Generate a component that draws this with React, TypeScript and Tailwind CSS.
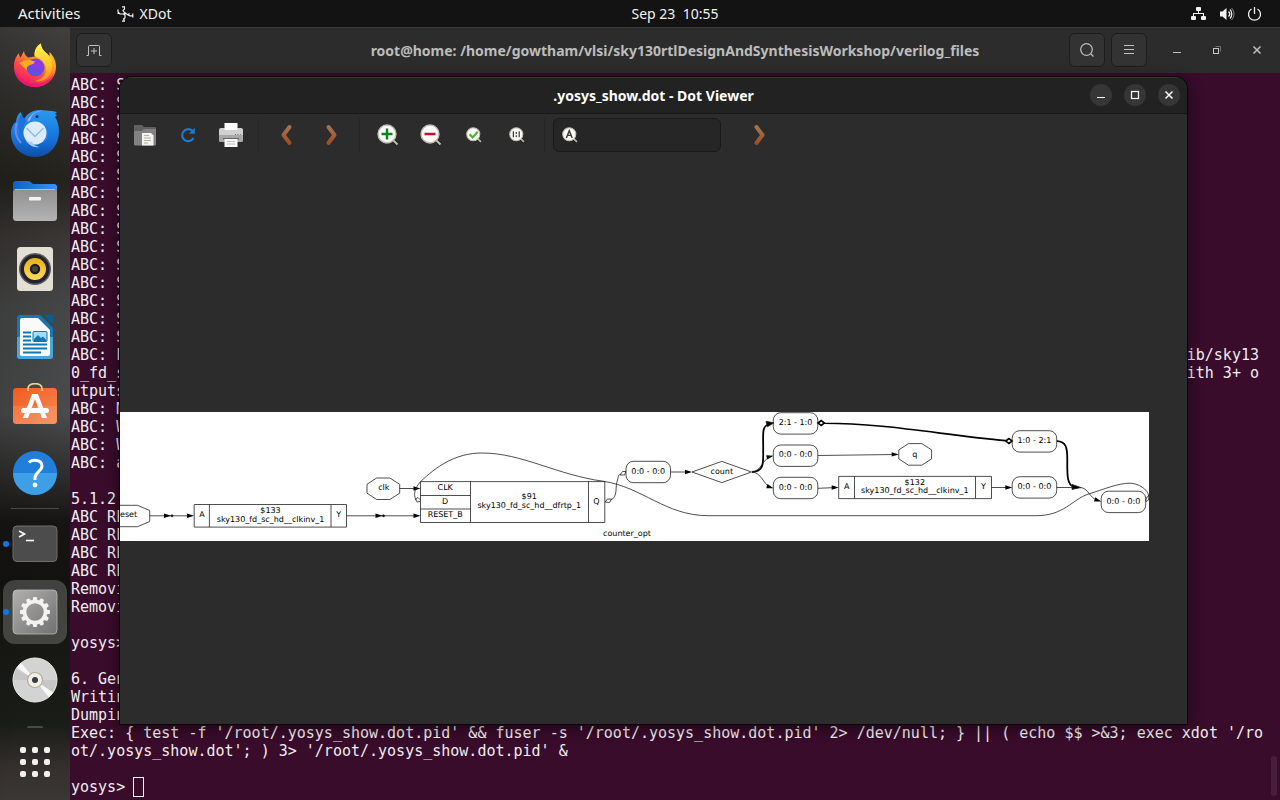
import type { ReactNode } from 'react';

const outputRows: [string, string?][] = [
  ...Array.from({ length: 15 }, (): [string] => ['ABC: S']),
  ['ABC: L', 'ib/sky13'],
  ['0_fd_s', 'ith 3+ o'],
  ['utputs'],
  ['ABC: M'],
  ['ABC: W'],
  ['ABC: W'],
  ['ABC: a'],
  [''],
  ['5.1.2.'],
  ['ABC RE'],
  ['ABC RE'],
  ['ABC RE'],
  ['ABC RE'],
  ['Removi'],
  ['Removi'],
  [''],
  ['yosys>'],
  [''],
  ['6. Gen'],
  ['Writin'],
  ['Dumpin'],
  [
    "Exec: { test -f '/root/.yosys_show.dot.pid' && fuser -s '/root/.yosys_show.dot.pid' 2> /dev/null; } || ( echo $$ >&3; exec xdot '/ro",
  ],
  ["ot/.yosys_show.dot'; ) 3> '/root/.yosys_show.dot.pid' &"],
  [''],
];

/* ---------- Top bar ---------- */

function TopBar() {
  return (
    <header className="flex h-[27px] shrink-0 items-center bg-[#131313] text-[14px] text-[#f2f2f2]">
      <div className="flex w-[160px] shrink-0 items-center whitespace-nowrap pl-[18px]">
        <button type="button" className="text-[15px]">Activities</button>
        <button type="button" className="ml-9 flex items-center gap-[6px]">
          <svg width="17" height="16" viewBox="0 0 17 16" fill="none" stroke="#f2f2f2" strokeWidth="1.2" aria-hidden="true">
            <path d="M5 .8h3M7.500.8V3L6 4.500 7.800 7M1 3.500v2.500l2 2h3.500M.5 7.500h2.500M6.500 8.500l2-1.500 2.500 2 1.500-1.500M11 9l2 .8h3M15.800 7.500v4M8 9v3l-2 1.200M7 12.500v2.500M5 15.200h3" />
            <circle cx="7.500" cy="8" r="1.200" fill="#f2f2f2" stroke="none" />
          </svg>
          XDot
        </button>
      </div>
      <div className="flex-1 text-center">Sep 23&nbsp; 10:55</div>
      <button type="button" aria-label="System menu" className="flex w-[90px] shrink-0 items-center justify-start gap-3">
        <svg width="17" height="16" viewBox="0 0 17 16" fill="#f2f2f2" aria-hidden="true">
          <rect x="6" y="1" width="5" height="4" rx="1" />
          <rect x="1" y="10" width="5" height="4" rx="1" />
          <rect x="11" y="10" width="5" height="4" rx="1" />
          <path d="M8 5h1v2h5v3h-1V8H4v2H3V7h5z" />
        </svg>
        <svg width="16" height="16" viewBox="0 0 16 16" fill="none" stroke="#f2f2f2" aria-hidden="true">
          <path d="M1 5.500h2.500L7.500 2v12L3.500 10.500H1z" fill="#f2f2f2" stroke="none" />
          <path d="M9.500 5.500c1.400 1.400 1.400 3.600 0 5" strokeWidth="1.400" />
          <path d="M11 3.500c2.400 2.500 2.400 6.500 0 9" strokeWidth="1.200" />
          <path d="M12.500 2c3.300 3.300 3.300 8.700 0 12" strokeWidth="1" opacity=".5" />
        </svg>
        <svg width="15" height="16" viewBox="0 0 15 16" fill="none" stroke="#f2f2f2" strokeWidth="1.3" aria-hidden="true">
          <path d="M4.500 3a6 6 0 1 0 6 0M7.500 1v7" />
        </svg>
      </button>
    </header>
  );
}

/* ---------- Dock ---------- */

function FirefoxIcon() {
  return (
    <svg width="46" height="46" viewBox="0 0 46 46" aria-hidden="true">
      <defs>
        <linearGradient id="ffBody" x1=".85" y1="0" x2=".3" y2="1">
          <stop offset="0" stopColor="#ffe23e" />
          <stop offset=".35" stopColor="#ffa51e" />
          <stop offset=".65" stopColor="#ff4f45" />
          <stop offset="1" stopColor="#f0126c" />
        </linearGradient>
        <linearGradient id="ffFlame" x1=".5" y1="0" x2=".6" y2="1">
          <stop offset="0" stopColor="#fff44f" />
          <stop offset=".6" stopColor="#ffc52c" />
          <stop offset="1" stopColor="#ff8b1c" />
        </linearGradient>
        <radialGradient id="ffGlobe" cx=".6" cy=".25" r=".8">
          <stop offset="0" stopColor="#a030f0" />
          <stop offset=".6" stopColor="#6a4ae0" />
          <stop offset="1" stopColor="#4460d8" />
        </radialGradient>
      </defs>
      <path d="M2 25c0-6 1.500-10 5-14 0 2 .8 3.500 1.700 4.500L12 9c.3 3 1.500 5 4 6.500l7-1C22 9 24 4 29 1.500c0 5 3 7.500 6.500 10.500 1 1 1.500 2 2 3V10c4 4 6.500 9 6.500 14.500C44 36 35 45 23 45S2 36 2 25z" fill="url(#ffBody)" />
      <path d="M22.500 14C22 9 24.500 4 29 1.500c0 5 3 7.500 6.500 10.500C41 17 42 28 37 34c-4 5-9 6-14 5 9-2 13-9 10-16-2-5-6-7-10.500-9z" fill="url(#ffFlame)" />
      <circle cx="23.500" cy="25.500" r="9" fill="url(#ffGlobe)" />
      <path d="M7.500 21c4-3.500 9-3.500 15.500-1.500-1 2.500-3 3-5 3.500-3 1-4 3-3 5.500-2-1.500-5-5-7.500-7.500z" fill="#ffab24" />
      <path d="M3 28c3 9 11 14 20 14 8 0 15-4 19-11-3 9-10 14-19 14C12 45 4 38 3 28z" fill="#e8127c" opacity=".7" />
    </svg>
  );
}

function ThunderbirdIcon() {
  return (
    <svg width="48" height="48" viewBox="0 0 48 48" aria-hidden="true">
      <defs>
        <linearGradient id="tbBody" x1=".5" y1="0" x2=".5" y2="1">
          <stop offset="0" stopColor="#2a9af0" />
          <stop offset=".6" stopColor="#1674dc" />
          <stop offset="1" stopColor="#0d4ea6" />
        </linearGradient>
      </defs>
      <path d="M10 3c0 3 1 5 3 7 3-5 8-9 16-9 4 0 8 1 12 1l5 1-2 2 2 1-2 2c2 3 4 8 4 14 0 15-10 26-24 26S0 37 0 24c0-5 2-9 5-11 0-4 2-8 5-10z" fill="url(#tbBody)" />
      <path d="M11 4c0 4 2 6 5 8-4 4-6 9-4 15-5-4-7-16-1-23z" fill="#1f6fe0" />
      <path d="M6 14c-3 7-1 15 4 20" fill="none" stroke="#7088e8" strokeWidth="2" />
      <path d="M16 12c3-6 8-10 15-10.500-7 2-10 4-11 8l-2 3z" fill="#b0a4f0" />
      <circle cx="26" cy="7.500" r="1.500" fill="#15336c" />
      <circle cx="24" cy="24" r="11.500" fill="#dcecfc" />
      <path d="M15.500 19l8.500 8.500 8.500-8.500" fill="none" stroke="#8fbce8" strokeWidth="1.400" />
      <path d="M15 32c3 4 8 7 13 6-4-1-6-3-7-5z" fill="#a9ccf8" />
      <path d="M36 22c2 8-3 13-9 13 5 0 9-4 9-13z" fill="#5e7ae8" />
    </svg>
  );
}

function FilesIcon() {
  return (
    <svg width="46" height="42" viewBox="0 0 46 42" aria-hidden="true">
      <defs>
        <linearGradient id="flFront" x1="0" y1="0" x2="0" y2="1">
          <stop offset="0" stopColor="#8f8f8f" />
          <stop offset="1" stopColor="#b4b4b4" />
        </linearGradient>
        <linearGradient id="flBack" x1="0" y1="0" x2="1" y2="0">
          <stop offset="0" stopColor="#0a62c8" />
          <stop offset="1" stopColor="#3a94ee" />
        </linearGradient>
      </defs>
      <path d="M1 4a3 3 0 0 1 3-3h12c3 0 3 3 6 3h20a3 3 0 0 1 3 3v20H1z" fill="url(#flBack)" />
      <rect x="1" y="9" width="44" height="32" rx="3.500" fill="url(#flFront)" />
      <path d="M3 9.500h40" stroke="#bdbdbd" />
      <rect x="17" y="17" width="12" height="3.500" rx="1" fill="#f4f4f4" />
    </svg>
  );
}

function RhythmboxIcon() {
  return (
    <svg width="38" height="46" viewBox="0 0 38 46" aria-hidden="true">
      <defs>
        <linearGradient id="rbCone" x1="0" y1="0" x2="0" y2="1">
          <stop offset="0" stopColor="#e8b010" />
          <stop offset="1" stopColor="#ffdc5c" />
        </linearGradient>
      </defs>
      <rect x="1" y="1" width="36" height="44" rx="3.500" fill="#e3dfd5" />
      <circle cx="19" cy="23" r="16" fill="#5d5d5d" />
      <circle cx="19" cy="23" r="14.500" fill="#23222e" />
      <circle cx="19" cy="23" r="11" fill="url(#rbCone)" />
      <circle cx="19" cy="23" r="5.200" fill="#1b1b1b" />
      <circle cx="19" cy="23" r="3" fill="#454545" />
    </svg>
  );
}

function WriterIcon() {
  return (
    <svg width="38" height="46" viewBox="0 0 38 46" aria-hidden="true">
      <rect x="1" y="1" width="36" height="44" rx="3" fill="#1478b4" />
      <path d="M1 23h36v19a3 3 0 0 1-3 3H4a3 3 0 0 1-3-3z" fill="#48a8dc" />
      <path d="M23 0h15v15z" fill="#3b4a50" />
      <path d="M28 1h9v9z" fill="#0d5c92" />
      <path d="M6 4h16l12 12v24a2 2 0 0 1-2 2H6a2 2 0 0 1-2-2V6a2 2 0 0 1 2-2z" fill="#fafafa" />
      <path d="M7 18.500h8M7 22.500h8M7 26.500h8M7 30.500h24M7 34.500h24M7 38.500h18" stroke="#0f76b8" strokeWidth="2" />
      <rect x="17" y="17.500" width="14" height="10" rx="1" fill="#a8daf4" stroke="#0f76b8" />
      <path d="M18 27v-2l4-4 3 3 2-1.500 3 3V27z" fill="#0f76b8" />
    </svg>
  );
}

function SoftwareIcon() {
  return (
    <svg width="46" height="44" viewBox="0 0 46 44" aria-hidden="true">
      <defs>
        <linearGradient id="swBag" x1="0" y1="0" x2="1" y2="1">
          <stop offset="0" stopColor="#f35a20" />
          <stop offset="1" stopColor="#f58a55" />
        </linearGradient>
      </defs>
      <rect x="1" y="5" width="44" height="36" rx="3.500" fill="url(#swBag)" />
      <path d="M1 23h44v14.500a3.500 3.500 0 0 1-3.500 3.500h-37A3.500 3.500 0 0 1 1 37.500z" fill="#fff" opacity=".1" />
      <path d="M16 8V5.500c0-6.500 14-6.500 14 0V8" fill="none" stroke="#f0d29c" strokeWidth="1.700" />
      <path d="M20 11h6l9 24h-5l-7-19-7 19h-5z" fill="#fff" />
      <rect x="9" y="25" width="28" height="5" rx="2.500" fill="#fff" />
    </svg>
  );
}

function HelpIcon() {
  return (
    <svg width="46" height="46" viewBox="0 0 46 46" aria-hidden="true">
      <circle cx="23" cy="23" r="22" fill="#1f7fda" />
      <path d="M1 23a22 22 0 0 0 44 0z" fill="#3f9fe6" />
      <path d="M17 12.500c3-3.500 13-3 13 3.500 0 5-7 6-7 12v2" fill="none" stroke="#fff" strokeWidth="3" />
      <circle cx="23" cy="35" r="2.400" fill="#fff" />
    </svg>
  );
}

function TerminalIcon() {
  return (
    <svg width="46" height="38" viewBox="0 0 46 38" aria-hidden="true">
      <rect x="1" y="1" width="44" height="35.500" rx="4" fill="#4c4c4c" stroke="#6c6c6c" />
      <path d="M7 6l5.500 3L7 12" fill="none" stroke="#fff" strokeWidth="1.600" />
      <path d="M14 15.500h8" stroke="#fff" strokeWidth="1.600" />
    </svg>
  );
}

const gearTeeth = [0, 30, 60, 90, 120, 150, 180, 210, 240, 270, 300, 330];

function GearIcon() {
  return (
    <svg width="46" height="46" viewBox="0 0 46 46" aria-hidden="true">
      <defs>
        <linearGradient id="gearTile" x1="0" y1="0" x2="1" y2="1">
          <stop offset="0" stopColor="#b0b0b0" />
          <stop offset="1" stopColor="#707070" />
        </linearGradient>
      </defs>
      <rect x="1" y="1" width="44" height="44" rx="4" fill="url(#gearTile)" stroke="#c6c6c6" strokeWidth=".7" />
      <circle cx="23" cy="23" r="10.500" fill="none" stroke="#f4f2f0" strokeWidth="3.600" />
      {gearTeeth.map((a) => (
        <path key={a} d="M20.500 12l.8-4h3.400l.8 4z" fill="#f4f2f0" transform={`rotate(${a} 23 23)`} />
      ))}
    </svg>
  );
}

function DiscIcon() {
  return (
    <svg width="46" height="46" viewBox="0 0 46 46" aria-hidden="true">
      <circle cx="23" cy="23" r="22" fill="#d3d3d3" stroke="#ececec" />
      <path d="M23 23L1.500 23A22 22 0 0 1 4 12zM23 23h21.500A22 22 0 0 1 39 37z" fill="#c6c6c6" />
      <path d="M23 23L5 10.500l4-5zM23 23l18 12.500-4 5z" fill="#f8f8f8" />
      <circle cx="23" cy="23" r="7.500" fill="#f0efec" stroke="#b2ac9c" strokeWidth="1.200" />
      <circle cx="23" cy="23" r="3" fill="#3c3c3c" />
    </svg>
  );
}

function DockItem({ label, running, active, children }: { label: string; running?: boolean; active?: boolean; children: ReactNode }) {
  return (
    <li className="relative flex h-[68px] items-center justify-center">
      {running && <span className="absolute left-[3px] size-[6px] rounded-full bg-[#0a78e8]" />}
      <button
        type="button"
        aria-label={label}
        className={
          active
            ? 'flex size-16 items-center justify-center rounded-xl bg-white/20'
            : 'flex size-16 items-center justify-center rounded-xl'
        }
      >
        {children}
      </button>
    </li>
  );
}

function Dock() {
  return (
    <nav
      aria-label="Dock"
      className="flex w-[70px] shrink-0 flex-col overflow-hidden bg-[linear-gradient(100deg,rgba(10,8,4,0.3)_0%,rgba(10,8,4,0)_70%),linear-gradient(180deg,#4c4b4a_0%,#3c3a38_8%,#26251f_20%,#3e3b39_27%,#494a4b_36%,#4b4c4d_50%,#353535_56%,#171513_64%,#12120f_72%,#171813_80%,#1a1c17_90%,#35302d_96%,#3b3734_100%)]"
    >
      <ul className="pt-1">
        <DockItem label="Firefox"><FirefoxIcon /></DockItem>
        <DockItem label="Thunderbird"><ThunderbirdIcon /></DockItem>
        <DockItem label="Files"><FilesIcon /></DockItem>
        <DockItem label="Rhythmbox"><RhythmboxIcon /></DockItem>
        <DockItem label="Writer"><WriterIcon /></DockItem>
        <DockItem label="Software"><SoftwareIcon /></DockItem>
        <DockItem label="Help"><HelpIcon /></DockItem>
        <li role="separator" className="mx-[11px] mb-px mt-px h-px bg-white/20" />
        <DockItem label="Terminal" running><TerminalIcon /></DockItem>
        <DockItem label="XDot" running active><GearIcon /></DockItem>
        <DockItem label="Disc"><DiscIcon /></DockItem>
      </ul>
      <div className="mx-auto mt-3 h-[2px] w-4 rounded-t-full bg-white/20" />
      <button type="button" aria-label="Show applications" className="mx-auto mt-[19px] grid grid-cols-3 gap-[6px]">
        {Array.from({ length: 9 }, (_, i) => (
          <span key={i} className="size-[6px] rounded-[2px] bg-[#f2f2f2]" />
        ))}
      </button>
    </nav>
  );
}

/* ---------- Terminal ---------- */

function Terminal() {
  const headerButton = 'flex h-[34px] w-9 items-center justify-center rounded-md border border-[#1c1c1c] bg-[#333333]';
  return (
    <section className="flex min-w-0 flex-1 flex-col bg-[#380c2a]">
      <header className="grid h-[46px] shrink-0 grid-cols-[1fr_auto_1fr] items-center border-t border-[#3a3a3a] bg-[#2c2c2c] pb-px text-[#b8b8b8]">
        <div className="pl-[6px]">
          <button type="button" aria-label="New tab" className={headerButton}>
            <svg width="16" height="16" viewBox="0 0 16 16" fill="none" stroke="#c0c0c0" aria-hidden="true">
              <path d="M.5 13.500h2V4.500a1 1 0 0 1 1-1h9a1 1 0 0 1 1 1v9h2M8 6v6M5 9h6" />
            </svg>
          </button>
        </div>
        <h1 className="whitespace-nowrap text-[14px] font-bold text-[#bcbcbc]">
          root@home: /home/gowtham/vlsi/sky130rtlDesignAndSynthesisWorkshop/verilog_files
        </h1>
        <div className="flex items-center justify-end pr-[3px]">
          <button type="button" aria-label="Search" className={headerButton}>
            <svg width="16" height="16" viewBox="0 0 16 16" fill="none" stroke="#b8b8b8" strokeWidth="1.300" aria-hidden="true">
              <circle cx="7.500" cy="7.500" r="5.800" />
              <path d="M11.700 11.700L14.500 14.500" />
            </svg>
          </button>
          <button type="button" aria-label="Menu" className={`${headerButton} ml-[6px]`}>
            <svg width="12" height="12" viewBox="0 0 12 12" stroke="#c0c0c0" aria-hidden="true">
              <path d="M1 1.500h10M1 5.500h10M1 9.500h10" />
            </svg>
          </button>
          <button type="button" aria-label="Minimize" className="ml-[10px] flex size-10 items-center justify-center">
            <svg width="10" height="10" viewBox="0 0 10 10" stroke="#c0c0c0" aria-hidden="true">
              <path d="M1 7.500h8" />
            </svg>
          </button>
          <button type="button" aria-label="Restore" className="flex size-10 items-center justify-center">
            <svg width="10" height="10" viewBox="0 0 10 10" fill="none" aria-hidden="true">
              <path d="M3.500 1.500h5v5" stroke="#6c6c6c" />
              <rect x="1.500" y="3.500" width="5" height="5" stroke="#c8c8c8" />
            </svg>
          </button>
          <button type="button" aria-label="Close" className="flex size-10 items-center justify-center">
            <svg width="10" height="10" viewBox="0 0 10 10" stroke="#c0c0c0" strokeWidth="1.500" aria-hidden="true">
              <path d="M1.500 1.500l7 7M8.500 1.500l-7 7" />
            </svg>
          </button>
        </div>
      </header>
      <div className="flex min-h-0 flex-1 overflow-hidden">
        <div className="min-w-0 flex-1 whitespace-pre pl-px pt-[3px] font-['DejaVu_Sans_Mono',monospace] text-[15px] leading-[18px] text-[#f0eef0]">
          {outputRows.map(([start, end], i) => (
            <div key={i} className="flex h-[18px] justify-between">
              <span>{start}</span>
              {end && <span>{end}</span>}
            </div>
          ))}
          <div className="flex h-[18px] items-center">
            <span>{'yosys> '}</span>
            <span className="-ml-px h-5 w-[11px] shrink-0 border border-white" />
          </div>
        </div>
        <div className="flex w-[21px] shrink-0 items-end justify-end pb-1 pr-[3px]">
          <div className="h-10 w-[6px] rounded-full bg-[#471f3b]" />
        </div>
      </div>
    </section>
  );
}

/* ---------- Dot viewer ---------- */

function ChevronGlyph({ back, id }: { back?: boolean; id: string }) {
  return (
    <svg width="14" height="22" viewBox="0 0 14 22" fill="none" aria-hidden="true">
      <defs>
        <linearGradient id={id} gradientUnits="userSpaceOnUse" x1="0" y1="0" x2="0" y2="22">
          <stop offset="0" stopColor="#a27a58" />
          <stop offset=".5" stopColor="#a2623c" />
          <stop offset="1" stopColor="#a04420" />
        </linearGradient>
      </defs>
      <path
        d={back ? 'M9.500 3L3.500 11l6 8' : 'M4.500 3l6 8-6 8'}
        stroke={`url(#${id})`}
        strokeWidth="4"
        strokeLinecap="round"
        strokeLinejoin="round"
      />
    </svg>
  );
}

function Magnifier({ small, children }: { small?: boolean; children: ReactNode }) {
  return (
    <svg width={small ? 16 : 22} height={small ? 16 : 22} viewBox="0 0 22 22" aria-hidden="true">
      <path d="M15 15l5.500 5.500" stroke="#1c1c18" strokeWidth="4" />
      <path d="M15 15l5.500 5.500" stroke="#bcb8ac" strokeWidth="2.200" />
      <circle cx="10" cy="10" r="9" fill="#fafaf8" stroke="#c0bcb0" strokeWidth="1.400" />
      {children}
    </svg>
  );
}

function ToolButton({ label, children }: { label: string; children: ReactNode }) {
  return (
    <button type="button" aria-label={label} className="flex h-9 w-[43px] shrink-0 items-center justify-center">
      {children}
    </button>
  );
}

function Separator() {
  return (
    <div className="flex w-[13px] shrink-0 justify-center">
      <div className="h-[34px] w-px bg-[#262626]" />
    </div>
  );
}

function Toolbar() {
  return (
    <div className="flex h-[42px] shrink-0 items-center pl-[3px]">
      <ToolButton label="Open">
        <svg width="24" height="24" viewBox="0 0 24 24" aria-hidden="true">
          <path d="M1 3a1 1 0 0 1 1-1h7l2 2h11a1 1 0 0 1 1 1v17H1z" fill="#606060" />
          <path d="M1 8h8l2-2h12v15a1.500 1.500 0 0 1-1.500 1.500h-19A1.500 1.500 0 0 1 1 21z" fill="#828282" />
          <path d="M9 10h9l2.500 2.500V22.500H9z" fill="#f4f3f0" />
          <path d="M11 12.500h5M11 15h7M11 17.500h7M11 20h4" stroke="#b4b0a8" />
        </svg>
      </ToolButton>
      <ToolButton label="Reload">
        <svg width="16" height="16" viewBox="0 0 16 16" fill="none" aria-hidden="true">
          <path d="M12.500 4a6 6 0 1 0 1 7" stroke="#1c7ad0" strokeWidth="2.200" />
          <path d="M14.800.800v6H8.800z" fill="#1c7ad0" />
        </svg>
      </ToolButton>
      <ToolButton label="Print">
        <svg width="24" height="24" viewBox="0 0 24 24" aria-hidden="true">
          <rect x="0" y="5" width="24" height="14" rx="2" fill="#d0d0ce" />
          <path d="M0 12h24v5a2 2 0 0 1-2 2H2a2 2 0 0 1-2-2z" fill="#a8a8a6" />
          <rect x="5.500" y="0" width="13" height="7" fill="#fbfbfb" />
          <path d="M4 15h16v1.500H4z" fill="#666" />
          <rect x="5.500" y="16" width="13" height="8" fill="#fbfbfb" />
          <path d="M8 18.500h8M8 21h8" stroke="#bbb" />
          <path d="M16 11.500h1M18.500 11.500h1" stroke="#d04040" strokeWidth="1.200" />
          <path d="M21 11.500h1" stroke="#4a9a4a" strokeWidth="1.200" />
        </svg>
      </ToolButton>
      <Separator />
      <button type="button" aria-label="Back" className="flex w-11 shrink-0 justify-center"><ChevronGlyph back id="chevBack" /></button>
      <button type="button" aria-label="Forward" className="flex w-11 shrink-0 justify-center"><ChevronGlyph id="chevFwd" /></button>
      <Separator />
      <ToolButton label="Zoom in">
        <Magnifier><path d="M10 4.500v11M4.500 10h11" stroke="#0b8420" strokeWidth="2.400" /></Magnifier>
      </ToolButton>
      <ToolButton label="Zoom out">
        <Magnifier><path d="M4.500 10h11" stroke="#c4102c" strokeWidth="2.600" /></Magnifier>
      </ToolButton>
      <ToolButton label="Zoom to fit">
        <Magnifier small><path d="M5 10l4 4.500 7-8" fill="none" stroke="#4cae2c" strokeWidth="2.800" /></Magnifier>
      </ToolButton>
      <ToolButton label="Zoom 100%">
        <Magnifier small><path d="M6 6v8M14 6v8M10 7v2.500M10 11.500V14" stroke="#3c3c3c" strokeWidth="1.700" /></Magnifier>
      </ToolButton>
      <Separator />
      <label className="ml-[2px] flex h-[34px] w-[168px] shrink-0 items-center gap-2 rounded-md border border-[#1a1a1a] bg-[#262626] pl-[8px]">
        <Magnifier small>
          <path d="M6 15l4-10 4 10M7.500 11.500h5" fill="none" stroke="#3c3c3c" strokeWidth="2" />
        </Magnifier>
        <input type="text" aria-label="Find" className="min-w-0 flex-1 bg-transparent text-[14px] text-white outline-none" />
      </label>
      <div className="ml-4 flex">
        <ToolButton label="Find next"><ChevronGlyph id="chevFind" /></ToolButton>
      </div>
    </div>
  );
}

function Arrow({ x, y, angle = 0 }: { x: number; y: number; angle?: number }) {
  return <path d="M0 0L-7-2.200V2.200z" fill="#000" stroke="none" transform={`translate(${x} ${y}) rotate(${angle})`} />;
}

function RangeNode({ x, y, text }: { x: number; y: number; text: string }) {
  return (
    <g>
      <rect x={x} y={y} width="44.500" height="21.400" rx="7.500" />
      <Label x={x + 22.200} y={y + 12.400}>{text}</Label>
    </g>
  );
}

function Label({ x, y, children }: { x: number; y: number; children: ReactNode }) {
  return (
    <text x={x} y={y} textAnchor="middle" fill="#000" stroke="none">
      {children}
    </text>
  );
}

function Graph() {
  return (
    <svg
      width="1029"
      height="129"
      viewBox="120 412 1029 129"
      className="block shrink-0 bg-white font-['DejaVu_Sans',sans-serif] text-[8px] [text-rendering:geometricPrecision]"
      fill="none"
      stroke="#222"
      strokeWidth=".8"
      role="img"
      aria-label="counter_opt"
    >
      <path d="M105 505.300h32.500l12.200 5.200v11l-12.200 5.200H105" />
      <Label x={127} y={517}>reset</Label>
      <path d="M149.700 515.800H190" />
      <Arrow x={171} y={515.800} />
      <circle cx="172" cy="515.800" r="1" fill="#000" />
      <Arrow x={194} y={515.800} />

      <path d="M194.200 504.500h152.300v22.600H194.200zM209.400 504.500v22.600M331 504.500v22.600" />
      <Label x={202} y={517}>A</Label>
      <Label x={270.500} y={513}>$133</Label>
      <Label x={270.500} y={522}>sky130_fd_sc_hd__clkinv_1</Label>
      <Label x={338.700} y={517}>Y</Label>
      <path d="M346.500 515.800H416" />
      <Arrow x={382.500} y={515.800} />
      <circle cx="383.500" cy="515.800" r="1" fill="#000" />
      <Arrow x={420.500} y={515.800} />

      <path d="M376.700 478h13.200l9.800 6.300v8.900l-9.800 6.300h-13.200l-9.700-6.300v-8.900z" />
      <Label x={383.800} y={490}>clk</Label>
      <path d="M399.700 488.500H416" />
      <Arrow x={420.500} y={488.500} />

      <path d="M420.500 481.600h184.300v40.900H420.500zM470.500 481.600v40.900M588.500 481.600v40.900M420.500 495.500h50M420.500 509h50" />
      <Label x={445.200} y={490}>CLK</Label>
      <Label x={445.200} y={504}>D</Label>
      <Label x={445.200} y={517}>RESET_B</Label>
      <Label x={529.200} y={499}>$91</Label>
      <Label x={529.200} y={508}>sky130_fd_sc_hd__dfrtp_1</Label>
      <Label x={596.300} y={504}>Q</Label>

      <path d="M420 501.500l-3 .5-1.500-3 2.500-1.500 2 2M416 500c-3-6-1-12 4.500-18.300C436 467 455 453 482 453c40 0 75 22 121 28.200 40 6 62 34.300 105 34.500h328c28 0 36-16 52-21.500 16-5 30-11 42-11 8 0 18 6 18.700 13" />
      <path d="M605 502l2.500-3h4l-2 3.500zM611 500c7-3 4-14 6.500-20 1-4 1-5 3-6M620 475l2.500-3.500h3.500l-1.500 3.500z" />

      <RangeNode x={626} y={461.300} text="0:0 - 0:0" />
      <path d="M670.500 472H688" />
      <Arrow x={692} y={472} />
      <path d="M692 472l29.800-10.600L751.500 472l-29.700 10.600z" />
      <Label x={721.800} y={474}>count</Label>

      <path d="M752 472c13-1 11-10 11.200-22 .2-16-2-24 6.300-26" stroke="#000" strokeWidth="1.800" />
      <path d="M774 422.800l-8-1.500 1.500 5.500z" fill="#000" />
      <path d="M752 472c9-1 11-13 18-15M752 472c9 0 12 13 18 15" />
      <Arrow x={773.500} y={455.700} angle={-14} />
      <Arrow x={773.500} y={488.300} angle={18} />
      <RangeNode x={773.300} y={412.700} text="2:1 - 1:0" />
      <RangeNode x={773.300} y={445} text="0:0 - 0:0" />
      <RangeNode x={773.300} y={477.300} text="0:0 - 0:0" />

      <path d="M818 423l3.200-2.400 3.200 2.400-3.200 2.400zM824.500 423.200c60 0 120 12 181 17.400M1005.700 441l3.200-2.400 3.200 2.400-3.200 2.400z" stroke="#000" strokeWidth="1.600" />
      <path d="M818 455.500l76-1" />
      <Arrow x={898.700} y={454.400} />
      <path d="M908.500 443.600h13.300l9.800 6.300v9l-9.800 6.300h-13.300l-9.700-6.300v-9z" />
      <Label x={914.800} y={456.500}>q</Label>

      <path d="M818 488.300l17-.7" />
      <Arrow x={838.700} y={487.500} />
      <path d="M838.700 476.400h152.800v22.200H838.700zM854.500 476.400v22.200M975.500 476.400v22.200" />
      <Label x={846.800} y={489}>A</Label>
      <Label x={914.800} y={485}>$132</Label>
      <Label x={914.800} y={493}>sky130_fd_sc_hd__clkinv_1</Label>
      <Label x={983.500} y={489}>Y</Label>
      <path d="M991.500 487.500H1008" />
      <Arrow x={1012.300} y={487.500} />
      <RangeNode x={1012.200} y={430.700} text="1:0 - 2:1" />
      <RangeNode x={1012.200} y={476.700} text="0:0 - 0:0" />
      <path d="M1056.700 487.500H1076" />
      <path d="M1057 441.200c9 .3 10.300 6 10.300 18 0 14-.8 26 6.500 27.300" stroke="#000" strokeWidth="1.800" />
      <path d="M1081 487.600l-9-3.200v5z" fill="#000" />
      <path d="M1080 487.500c8 0 10 11 17 12.500" />
      <Arrow x={1101.300} y={501.500} angle={18} />
      <RangeNode x={1101.200} y={491.200} text="0:0 - 0:0" />
      <path d="M1145.700 500l1.300-3 2-1.500-.5 4.500-2.300 1.500z" />
      <Label x={627} y={536}>counter_opt</Label>
    </svg>
  );
}

function DotViewer() {
  const windowButton = 'flex size-[22px] items-center justify-center rounded-full bg-[#363636]';
  return (
    <section className="absolute bottom-[76px] left-[120px] right-[93px] top-[77px] flex flex-col overflow-hidden rounded-t-xl bg-[#2c2c2c] shadow-[0_0_0_1px_#0c0609,0_3px_14px_rgba(0,0,0,0.55)]">
      <header className="grid h-[37px] shrink-0 grid-cols-[1fr_auto_1fr] items-center border-b border-t border-b-[#181818] border-t-[#343434] bg-[#222222] pb-px">
        <span />
        <h2 className="text-[14px] font-bold text-white">.yosys_show.dot - Dot Viewer</h2>
        <div className="flex justify-end gap-3 pr-[7px]">
          <button type="button" aria-label="Minimize" className={windowButton}>
            <svg width="10" height="10" viewBox="0 0 10 10" stroke="#fff" aria-hidden="true"><path d="M1 7.500h8" /></svg>
          </button>
          <button type="button" aria-label="Maximize" className={windowButton}>
            <svg width="10" height="10" viewBox="0 0 10 10" fill="none" stroke="#fff" aria-hidden="true"><rect x="1.500" y="1.500" width="7" height="7" strokeWidth="1.200" /></svg>
          </button>
          <button type="button" aria-label="Close" className={windowButton}>
            <svg width="10" height="10" viewBox="0 0 10 10" stroke="#fff" strokeWidth="1.500" aria-hidden="true"><path d="M1.500 1.500l7 7M8.500 1.500l-7 7" /></svg>
          </button>
        </div>
      </header>
      <Toolbar />
      <div className="min-h-0 flex-1 overflow-hidden pt-[256px]">
        <Graph />
      </div>
    </section>
  );
}

export default function App() {
  return (
    <div className="relative flex h-screen flex-col overflow-hidden bg-[#131313] font-['Noto_Sans',sans-serif]">
      <TopBar />
      <main className="flex min-h-0 flex-1">
        <Dock />
        <Terminal />
      </main>
      <DotViewer />
    </div>
  );
}
